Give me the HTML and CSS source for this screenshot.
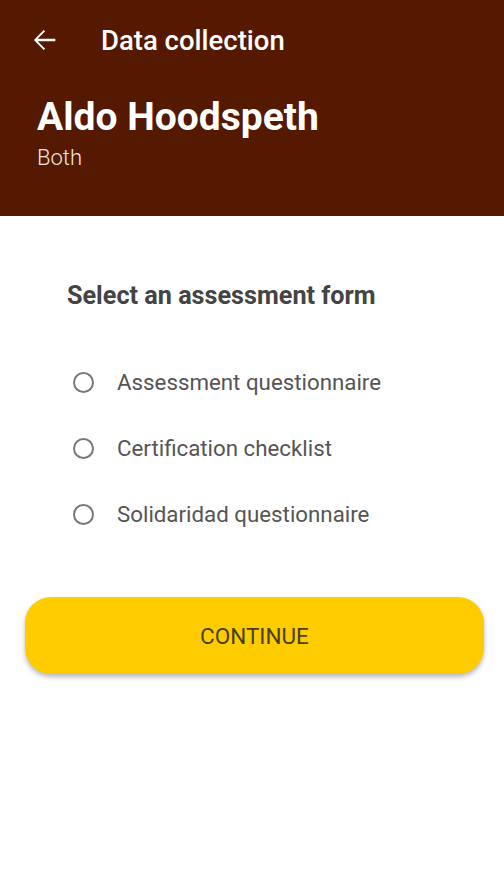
FILE: index.html
```html
<!DOCTYPE html>
<html lang="en">
<head>
  <meta charset="UTF-8" />
  <meta name="viewport" content="width=device-width, initial-scale=1.0"/>
  <title>Data collection</title>
  <link rel="stylesheet" href="styles.css">
</head>
<body>

<div class="header">
  <div class="toolbar">
    <button class="back-btn" aria-label="Back">
      <svg width="34" height="34" viewBox="0 0 24 24"><path d="M20 11.2H7.5l5.3-5.3-1-1L4.9 12l6.9 7.1 1-1-5.3-5.3H20z" fill="#fff"/></svg>
    </button>
    <div class="toolbar-title">Data collection</div>
  </div>
  <div class="farmer-name">Aldo Hoodspeth</div>
  <div class="farmer-type">Both</div>
</div>

<div class="content">
  <h2>Select an assessment form</h2>

  <div class="options">
    <label class="option">
      <input type="radio" name="form" />
      <span class="radio"></span>
      <span>Assessment questionnaire</span>
    </label>
    <label class="option">
      <input type="radio" name="form" />
      <span class="radio"></span>
      <span>Certification checklist</span>
    </label>
    <label class="option">
      <input type="radio" name="form" />
      <span class="radio"></span>
      <span>Solidaridad questionnaire</span>
    </label>
  </div>

  <button class="continue-btn">CONTINUE</button>
</div>

</body>
</html>
```

FILE: styles.css
```css
* {
  box-sizing: border-box;
  margin: 0;
  padding: 0;
  font-family: Roboto, "Noto Sans", sans-serif;
}

body {
  background-color: #fff;
  width: 504px;
  height: 896px;
}

.header {
  background-color: #541900;
  height: 216px;
  padding: 0 37px;
  color: #fff;
}

.toolbar {
  display: flex;
  align-items: center;
  height: 80px;
}

.back-btn {
  background: none;
  border: none;
  width: 34px;
  height: 34px;
  margin-left: -10px;
  margin-right: 40px;
  display: flex;
}

.toolbar-title {
  font-size: 27.5px;
  font-weight: 500;
}

.farmer-name {
  font-size: 39px;
  font-weight: 700;
  line-height: 46px;
  margin-top: 14px;
}

.farmer-type {
  font-size: 22px;
  font-weight: 300;
  line-height: 26px;
  margin-top: 5px;
  color: #f3e6e0;
}

.content {
  padding: 65px 20px 0 25px;
}

.content h2 {
  font-size: 25.2px;
  font-weight: 700;
  color: #444;
  margin-left: 42px;
  line-height: 30px;
}

.options {
  margin-top: 57px;
  margin-left: 48px;
  display: flex;
  flex-direction: column;
  gap: 38px;
}

.option {
  display: flex;
  align-items: center;
  font-size: 22.3px;
  color: #555;
  line-height: 28px;
  cursor: pointer;
}

.option input {
  display: none;
}

.radio {
  width: 21px;
  height: 21px;
  border: 2px solid #777;
  border-radius: 50%;
  margin-right: 23px;
}

.continue-btn {
  display: block;
  width: 459px;
  height: 77px;
  margin-top: 69px;
  background-color: #ffcc00;
  border: none;
  border-radius: 26px;
  font-size: 22.5px;
  color: #4a3e1c;
  box-shadow: 0 3px 5px rgba(0, 0, 0, 0.28);
  cursor: pointer;
}
```
